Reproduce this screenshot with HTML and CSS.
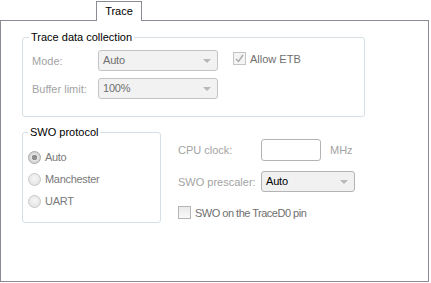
FILE: index.html
```html
<!DOCTYPE html>
<html lang="en">
<head>
  <meta charset="UTF-8">
  <title>Trace</title>
  <link rel="stylesheet" href="styles.css">
</head>
<body>

<div class="tabs">
  <div class="tab">Trace</div>
</div>

<div class="panel">
  <!-- Trace data collection -->
  <fieldset class="group group-trace">
    <legend>Trace data collection</legend>
    <div class="trace-rows">
      <div class="row">
        <span class="label">Mode:</span>
        <div class="select disabled"><span>Auto</span><i class="arrow"></i></div>
        <label class="check etb"><span class="box checked"><svg width="11" height="11" viewBox="0 0 11 11"><path d="M2 6 L4.5 8.5 L9 2" fill="none" stroke="#a9a9a9" stroke-width="1.4"/></svg></span>Allow ETB</label>
      </div>
      <div class="row">
        <span class="label">Buffer limit:</span>
        <div class="select disabled"><span>100%</span><i class="arrow"></i></div>
      </div>
    </div>
  </fieldset>

  <div class="lower">
    <!-- SWO protocol -->
    <fieldset class="group group-swo">
      <legend>SWO protocol</legend>
      <div class="radios">
        <label class="radio"><span class="dot on"></span>Auto</label>
        <label class="radio"><span class="dot"></span>Manchester</label>
        <label class="radio"><span class="dot"></span>UART</label>
      </div>
    </fieldset>

    <div class="swo-settings">
      <div class="row clock-row">
        <span class="label wide">CPU clock:</span>
        <div class="input"></div>
        <span class="unit">MHz</span>
      </div>
      <div class="row prescaler-row">
        <span class="label wide">SWO prescaler:</span>
        <div class="select small"><span>Auto</span><i class="arrow"></i></div>
      </div>
      <label class="check pin"><span class="box"></span>SWO on the TraceD0 pin</label>
    </div>
  </div>
</div>

</body>
</html>
```

FILE: styles.css
```css
body {
  margin: 0;
  font-family: 'Liberation Sans', Arial, sans-serif;
  font-size: 11px;
  background: #fff;
  color: #000;
}

.tabs {
  display: flex;
  padding: 1px 0 0 96px;
  height: 19px;
}

.tab {
  position: relative;
  z-index: 1;
  width: 44px;
  height: 19px;
  border: 1px solid #898c95;
  border-bottom: none;
  background: #fff;
  text-align: center;
  line-height: 18px;
  font-size: 11px;
}

.panel {
  box-sizing: border-box;
  width: 429px;
  height: 262px;
  border: 1px solid #898c95;
  padding: 10px 0 0 21px;
}

.group {
  margin: 0;
  padding: 0 0 0 6px;
  border: 1px solid #d5dfe5;
  border-radius: 3px;
}

.group legend {
  padding: 0 2px;
  line-height: 13px;
  font-size: 11px;
}

.group-trace {
  width: 343px;
  box-sizing: border-box;
  padding-bottom: 17px;
}

.trace-rows {
  display: flex;
  flex-direction: column;
  gap: 7px;
  margin-top: 6px;
  padding-left: 3px;
}

.row {
  display: flex;
  align-items: center;
}

.label {
  width: 66px;
  color: #a3a3a3;
}

.label.wide {
  width: 83px;
}

.select {
  box-sizing: border-box;
  position: relative;
  width: 120px;
  height: 21px;
  border: 1px solid #b4b4b4;
  border-radius: 3px;
  background: linear-gradient(#f4f4f4, #e6e6e6);
  padding-left: 4px;
  line-height: 19px;
  color: #000;
  letter-spacing: -0.2px;
}

.select.disabled {
  color: #6f6f6f;
  border-color: #c3c3c3;
  background: #f2f2f2;
}

.select.small {
  width: 94px;
  background: #f1f1f1;
}

.arrow {
  position: absolute;
  right: 6px;
  top: 8px;
  border-left: 4px solid transparent;
  border-right: 4px solid transparent;
  border-top: 4px solid #b8b8b8;
}

.check {
  display: flex;
  align-items: center;
  color: #6f6f6f;
}

.box {
  box-sizing: border-box;
  width: 13px;
  height: 13px;
  border: 1px solid #b5b5b5;
  background: linear-gradient(#eaeaea, #f8f8f8);
  margin-right: 4px;
  display: flex;
  align-items: center;
  justify-content: center;
}

.box.checked {
  background: #f4f4f4;
  border-color: #c4c4c4;
}

.etb {
  margin-left: 15px;
  margin-top: -4px;
}

.lower {
  display: flex;
  margin-top: 9px;
}

.group-swo {
  box-sizing: border-box;
  width: 139px;
  height: 97px;
  padding-left: 5px;
}

.radios {
  margin-top: 7px;
}

.radio {
  display: flex;
  align-items: center;
  height: 22px;
  color: #7a7a7a;
  letter-spacing: -0.3px;
}

.dot {
  box-sizing: border-box;
  width: 13px;
  height: 13px;
  border-radius: 50%;
  border: 1px solid #c8c8c8;
  background: radial-gradient(circle at 50% 40%, #f6f6f6, #dedede);
  margin-right: 4px;
}

.dot.on {
  border-color: #a9a9a9;
  background: radial-gradient(circle, #8e8e8e 0 2.5px, #e6e6e6 3px, #d4d4d4 5px);
}

.swo-settings {
  margin: 13px 0 0 17px;
  display: flex;
  flex-direction: column;
}

.input {
  box-sizing: border-box;
  width: 60px;
  height: 22px;
  border: 1px solid #b4b4b4;
  border-radius: 3px;
  background: #fff;
}

.unit {
  margin-left: 9px;
  color: #a3a3a3;
}

.prescaler-row {
  margin-top: 10px;
}

.pin {
  margin-top: 14px;
  letter-spacing: -0.5px;
}
```
